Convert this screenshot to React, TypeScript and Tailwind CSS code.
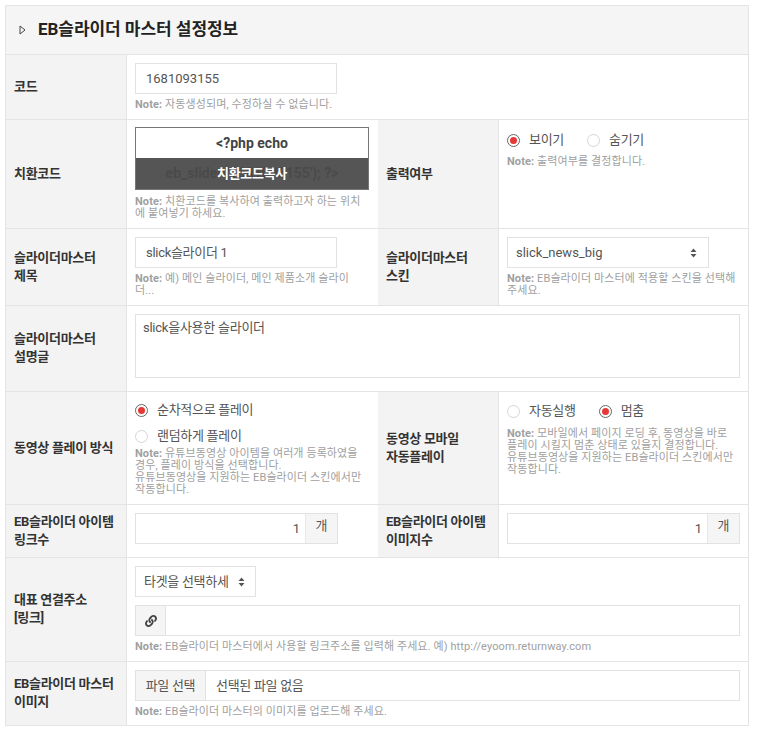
import React from "react";
import { FaLink } from "react-icons/fa";

const FONT = "font-['Roboto','Noto_Sans_CJK_KR',sans-serif]";

function Label({ children }: { children: React.ReactNode }) {
  return (
    <div className="w-[121px] shrink-0 bg-[#f3f3f3] border-r border-[#e4e4e4] flex items-center pl-[8px] pb-[1px] text-[13px] leading-[18px] font-bold tracking-[-0.3px] text-[#333]">
      <div>{children}</div>
    </div>
  );
}

function Note({ children }: { children: React.ReactNode }) {
  return (
    <div className="mt-[5px] text-[11px] leading-[12px] tracking-[0.1px] text-[#a0a0a0] whitespace-nowrap">
      <b className="font-bold">Note:</b> {children}
    </div>
  );
}

function Radio({ on, label }: { on?: boolean; label: string }) {
  return (
    <div className="flex items-center h-[24px] text-[13px] tracking-[-0.3px] text-[#555]">
      <span className={`w-[13px] h-[13px] rounded-full border flex items-center justify-center mr-[9px] ${on ? "border-[#666] bg-white" : "border-[#d5d5d5] bg-white"}`}>
        {on && <span className="w-[7px] h-[7px] rounded-full bg-[#e53935]" />}
      </span>
      {label}
    </div>
  );
}

function Sort() {
  return (
    <svg width="7" height="10" viewBox="0 0 7 10" className="shrink-0">
      <path d="M3.5 0.5 L6.5 4 H0.5 Z M3.5 9.5 L0.5 6 H6.5 Z" fill="#555" />
    </svg>
  );
}

function Row({ h, children }: { h: string; children: React.ReactNode }) {
  return <div className={`flex ${h} border-b border-[#e4e4e4]`}>{children}</div>;
}

function Input({ children }: { children: React.ReactNode }) {
  return (
    <div className="w-[202px] h-[31px] border border-[#e2e2e2] bg-white flex items-center pl-[10px] text-[13px] text-[#555]">{children}</div>
  );
}

function Count() {
  return (
    <div className="flex h-[31px] border border-[#e2e2e2] bg-white text-[13px] text-[#555]">
      <div className="flex-1 flex items-center justify-end pr-[5px] border-r border-[#e8e8e8]">1</div>
      <div className="w-[31px] bg-[#f5f5f5] flex items-center justify-center pb-[6px] text-[13px]">개</div>
    </div>
  );
}

export default function App() {
  return (
    <div className={`${FONT} w-[760px] h-[730px] bg-white pt-[5px] pl-[5px]`}>
      <div className="w-[744px] border border-[#e4e4e4] border-b-0">
        <div className="h-[49px] bg-[#f5f5f5] border-b border-[#e4e4e4] flex items-center pl-[13px]">
          <svg width="7" height="10" viewBox="0 0 7 10" className="mr-[12px]">
            <path d="M1 1 L6 5 L1 9 Z" fill="none" stroke="#444" strokeWidth="1" />
          </svg>
          <span className="text-[17px] font-bold tracking-[-0.05px] text-[#222]">EB슬라이더 마스터 설정정보</span>
        </div>

        <Row h="h-[65px]">
          <Label>코드</Label>
          <div className="flex-1 pl-[8px] pt-[8px]">
            <Input>1681093155</Input>
            <Note>자동생성되며, 수정하실 수 없습니다.</Note>
          </div>
        </Row>

        <Row h="h-[109px]">
          <Label>치환코드</Label>
          <div className="w-[251px] shrink-0 pl-[8px] pr-[8px] pt-[7px]">
            <div className="relative w-[234px] h-[63px] border border-[#777] bg-white text-center text-[14px] font-bold text-[#444] overflow-hidden">
              <div className="pt-[6px] leading-[18px]">&lt;?php echo</div>
              <div className="absolute left-0 right-0 bottom-0 h-[31px] bg-[#555] flex items-center justify-center text-white">
                <span className="absolute inset-0 flex items-center justify-center text-[#4a4a4a] whitespace-nowrap">eb_slider('1681093155'); ?&gt;</span>
                <span className="relative text-[13px] tracking-[-0.3px]">치환코드복사</span>
              </div>
            </div>
            <div className="mt-[6px]">
              <Note>치환코드를 복사하여 출력하고자 하는 위치<br />에 붙여넣기 하세요.</Note>
            </div>
          </div>
          <Label>출력여부</Label>
          <div className="flex-1 pl-[8px] pt-[8px]">
            <div className="flex gap-[23px]">
              <Radio on label="보이기" />
              <Radio label="숨기기" />
            </div>
            <div className="-mt-[1px]"><Note>출력여부를 결정합니다.</Note></div>
          </div>
        </Row>

        <Row h="h-[77px]">
          <Label>슬라이더마스터<br />제목</Label>
          <div className="w-[251px] shrink-0 pl-[8px] pr-[8px] pt-[8px]">
            <Input><span className="tracking-[-0.3px]">slick슬라이더 1</span></Input>
            <Note>예) 메인 슬라이더, 메인 제품소개 슬라이<br />더...</Note>
          </div>
          <Label>슬라이더마스터<br />스킨</Label>
          <div className="flex-1 pl-[8px] pr-[8px] pt-[8px]">
            <div className="w-[202px] h-[31px] border border-[#e2e2e2] flex items-center justify-between pl-[8px] pr-[11px] text-[13px] text-[#555]">
              slick_news_big
              <Sort />
            </div>
            <Note>EB슬라이더 마스터에 적용할 스킨을 선택해<br />주세요.</Note>
          </div>
        </Row>

        <Row h="h-[86px]">
          <Label>슬라이더마스터<br />설명글</Label>
          <div className="flex-1 pl-[8px] pr-[8px] pt-[8px]">
            <div className="h-[64px] border border-[#e2e2e2] pl-[7px] pt-[4px] text-[13px] leading-[18px] tracking-[-0.25px] text-[#555]">slick을사용한 슬라이더</div>
          </div>
        </Row>

        <Row h="h-[113px]">
          <Label>동영상 플레이 방식</Label>
          <div className="w-[251px] shrink-0 pl-[8px] pr-[8px] pt-[6px]">
            <Radio on label="순차적으로 플레이" />
            <div className="mt-[2px]"><Radio label="랜덤하게 플레이" /></div>
            <div className="-mt-[5px]">
              <Note>유튜브동영상 아이템을 여러개 등록하였을<br />경우, 플레이 방식을 선택합니다.<br />유튜브동영상을 지원하는 EB슬라이더 스킨에서만<br />작동합니다.</Note>
            </div>
          </div>
          <Label>동영상 모바일<br />자동플레이</Label>
          <div className="flex-1 pl-[8px] pr-[8px] pt-[7px]">
            <div className="flex gap-[23px]">
              <Radio label="자동실행" />
              <Radio on label="멈춤" />
            </div>
            <Note>모바일에서 페이지 로딩 후, 동영상을 바로<br />플레이 시킬지 멈춘 상태로 있을지 결정합니다.<br />유튜브동영상을 지원하는 EB슬라이더 스킨에서만<br />작동합니다.</Note>
          </div>
        </Row>

        <Row h="h-[53px]">
          <Label>EB슬라이더 아이템<br />링크수</Label>
          <div className="w-[251px] shrink-0 pl-[8px] pr-[40px] pt-[8px]"><Count /></div>
          <Label>EB슬라이더 아이템<br />이미지수</Label>
          <div className="flex-1 pl-[8px] pr-[8px] pt-[8px]"><Count /></div>
        </Row>

        <Row h="h-[104px]">
          <Label>대표 연결주소<br />[링크]</Label>
          <div className="flex-1 pl-[8px] pr-[8px] pt-[8px]">
            <div className="w-[121px] h-[31px] border border-[#e2e2e2] flex items-center justify-between pl-[8px] pr-[10px] text-[13px] tracking-[-0.3px] text-[#555]">
              타겟을 선택하세
              <Sort />
            </div>
            <div className="mt-[8px] h-[31px] border border-[#e2e2e2] flex">
              <div className="w-[30px] bg-[#f5f5f5] border-r border-[#e2e2e2] flex items-center justify-center text-[#444]">
                <FaLink size={12} />
              </div>
            </div>
            <Note>EB슬라이더 마스터에서 사용할 링크주소를 입력해 주세요. 예) http://eyoom.returnway.com</Note>
          </div>
        </Row>

        <Row h="h-[64px]">
          <Label>EB슬라이더 마스터<br />이미지</Label>
          <div className="flex-1 pl-[8px] pr-[8px] pt-[8px]">
            <div className="h-[31px] border border-[#e2e2e2] flex items-center text-[13px] tracking-[-0.3px] text-[#555]">
              <div className="w-[70px] h-full bg-[#f5f5f5] border-r border-[#e2e2e2] flex items-center justify-center">파일 선택</div>
              <div className="pl-[10px]">선택된 파일 없음</div>
            </div>
            <Note>EB슬라이더 마스터의 이미지를 업로드해 주세요.</Note>
          </div>
        </Row>
      </div>
    </div>
  );
}
